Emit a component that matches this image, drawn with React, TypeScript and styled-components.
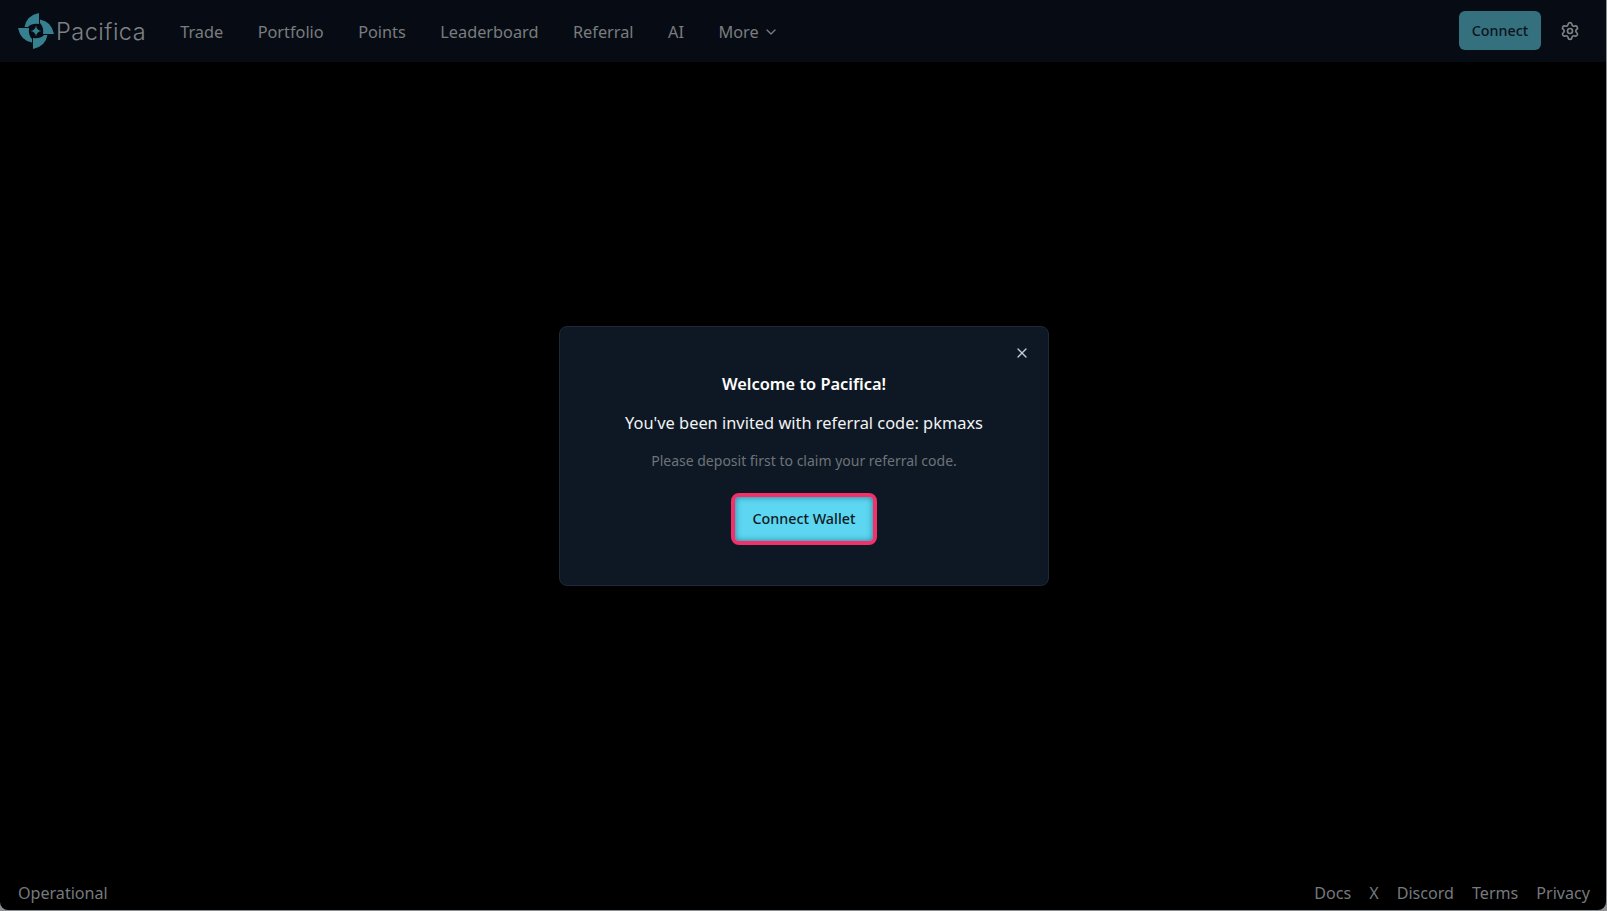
import React from "react";
import styled, { createGlobalStyle } from "styled-components";
import { ChevronDown, Settings, X } from "lucide-react";

const GlobalStyle = createGlobalStyle`
  html, body {
    margin: 0;
    padding: 0;
    height: 100%;
    background: #8d9092;
  }
  #root {
    height: 100%;
  }
  * {
    box-sizing: border-box;
  }
`;

const Page = styled.div`
  display: flex;
  flex-direction: column;
  height: 910px;
  margin-right: 1px;
  background: #000;
  border-radius: 0 0 8px 8px;
  overflow: hidden;
  font-family: "Noto Sans", "Open Sans", sans-serif;
`;

const Header = styled.header`
  display: flex;
  align-items: center;
  justify-content: space-between;
  height: 62px;
  padding: 0 18px;
  background: #070c14;
`;

const Left = styled.div`
  display: flex;
  align-items: center;
  gap: 34px;
`;

const Logo = styled.div`
  display: flex;
  align-items: center;
  gap: 2px;
  font-family: "Inter", sans-serif;
  font-weight: 300;
  font-size: 23.5px;
  letter-spacing: 0.5px;
  color: #7f8184;
`;

const Nav = styled.nav`
  display: flex;
  align-items: center;
  gap: 34.5px;
  padding-top: 2px;
`;

const NavItem = styled.a`
  display: flex;
  align-items: center;
  gap: 4px;
  font-size: 16.3px;
  color: #7a7c7f;
`;

const Right = styled.div`
  display: flex;
  align-items: center;
  gap: 19px;
  margin-right: 8px;
`;

const ConnectButton = styled.button`
  width: 82px;
  height: 39px;
  margin-bottom: 2px;
  border: 0;
  border-radius: 6px;
  background: #35707f;
  color: #0b141c;
  font-family: inherit;
  font-size: 14.3px;
  font-weight: 500;
`;

const Main = styled.main`
  flex: 1;
  display: flex;
  align-items: center;
  justify-content: center;
`;

const Modal = styled.div`
  position: relative;
  display: flex;
  flex-direction: column;
  align-items: center;
  width: 490px;
  height: 260px;
  margin: -26px 0 0 2px;
  padding-top: 45px;
  background: #0e1824;
  border: 1px solid #1f2a36;
  border-radius: 8px;
`;

const CloseButton = styled.span`
  position: absolute;
  top: 18px;
  right: 18px;
  display: flex;
  color: #c9ccd0;
`;

const Title = styled.h2`
  margin: 0;
  font-size: 16.4px;
  line-height: 24px;
  font-weight: 600;
  color: #fff;
`;

const Subtitle = styled.p`
  margin: 15px 0 0;
  font-size: 16.4px;
  line-height: 24px;
  color: #f2f3f4;
`;

const Hint = styled.p`
  margin: 15px 0 0;
  font-size: 14px;
  line-height: 22px;
  color: #6d7379;
`;

const WalletButton = styled.button`
  width: 146px;
  height: 52px;
  margin-top: 21px;
  border: 4px solid #f52f69;
  border-radius: 8px;
  background: #5dd6f1;
  box-shadow: inset 0 0 6px rgba(10, 70, 90, 0.6);
  color: #0e1a24;
  font-family: inherit;
  font-size: 14.3px;
  font-weight: 500;
`;

const Footer = styled.footer`
  display: flex;
  align-items: center;
  justify-content: space-between;
  height: 35px;
  padding: 0 16px 0 18px;
  font-size: 16.1px;
  color: #77797c;
`;

const FooterLinks = styled.div`
  display: flex;
  gap: 18px;
`;

const navItems = ["Trade", "Portfolio", "Points", "Leaderboard", "Referral", "AI"];
const footerLinks = ["Docs", "X", "Discord", "Terms", "Privacy"];

const bladeAngles = [0, 90, 180, 270];

const PacificaMark = () => (
  <svg width="36" height="36" viewBox="0 0 36 36" fill="#37808f">
    {bladeAngles.map((angle) => (
      <path
        key={angle}
        d="M0 15 L11 15 Q10 22 14 26 L14 29.5 Q2.5 27.5 0 15Z"
        transform={`rotate(${angle} 18 18)`}
      />
    ))}
    <path d="M18 12.5 Q18.6 17.4 23.5 18 Q18.6 18.6 18 23.5 Q17.4 18.6 12.5 18 Q17.4 17.4 18 12.5Z" />
  </svg>
);

const App = () => (
  <Page>
    <GlobalStyle />
    <Header>
      <Left>
        <Logo>
          <PacificaMark />
          Pacifica
        </Logo>
        <Nav>
          {navItems.map((item) => (
            <NavItem key={item}>{item}</NavItem>
          ))}
          <NavItem>
            More
            <ChevronDown size={16} strokeWidth={2} />
          </NavItem>
        </Nav>
      </Left>
      <Right>
        <ConnectButton>Connect</ConnectButton>
        <Settings size={20} color="#7f8285" />
      </Right>
    </Header>
    <Main>
      <Modal>
        <CloseButton>
          <X size={16} />
        </CloseButton>
        <Title>Welcome to Pacifica!</Title>
        <Subtitle>You've been invited with referral code: pkmaxs</Subtitle>
        <Hint>Please deposit first to claim your referral code.</Hint>
        <WalletButton>Connect Wallet</WalletButton>
      </Modal>
    </Main>
    <Footer>
      <span>Operational</span>
      <FooterLinks>
        {footerLinks.map((link) => (
          <span key={link}>{link}</span>
        ))}
      </FooterLinks>
    </Footer>
  </Page>
);

export default App;
